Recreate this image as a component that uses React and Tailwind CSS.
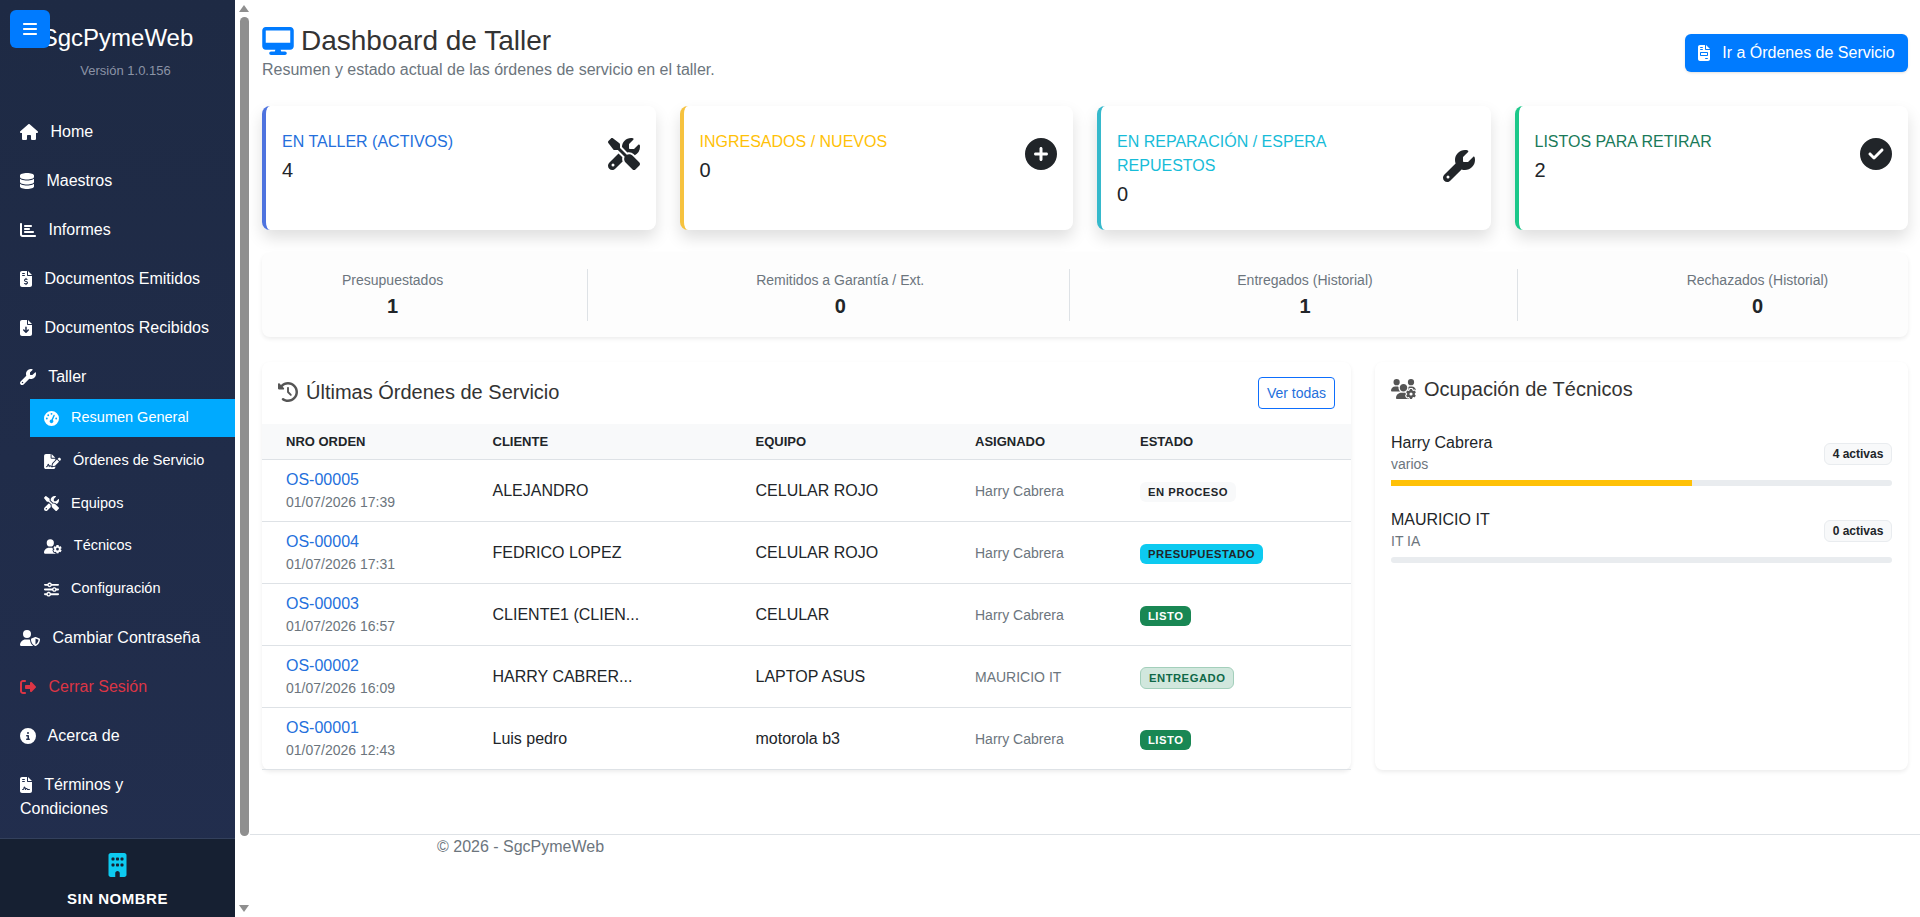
import {
  FaBars, FaBuilding, FaChartBar, FaCircleCheck, FaCircleInfo, FaCirclePlus, FaClockRotateLeft, FaDatabase, FaDesktop,
  FaFileArrowDown, FaFileContract, FaFileInvoice, FaFileInvoiceDollar, FaFileSignature, FaGaugeHigh, FaHouse,
  FaRightFromBracket, FaScrewdriverWrench, FaSliders, FaUserGear, FaUserShield, FaUsersGear, FaWrench,
} from 'react-icons/fa6';

const topItems = [
  { icon: FaHouse, size: 'w-[18px]', label: 'Home' },
  { icon: FaDatabase, size: 'w-[14px]', label: 'Maestros' },
  { icon: FaChartBar, size: 'w-4', label: 'Informes' },
  { icon: FaFileInvoiceDollar, size: 'w-3', label: 'Documentos Emitidos' },
  { icon: FaFileArrowDown, size: 'w-3', label: 'Documentos Recibidos' },
  { icon: FaWrench, size: 'w-4', label: 'Taller' },
];

const subItems = [
  { icon: FaGaugeHigh, size: 'w-[15px]', label: 'Resumen General', active: true },
  { icon: FaFileSignature, size: 'w-[17px]', label: 'Órdenes de Servicio' },
  { icon: FaScrewdriverWrench, size: 'w-[15px]', label: 'Equipos' },
  { icon: FaUserGear, size: 'w-[18px]', label: 'Técnicos' },
  { icon: FaSliders, size: 'w-[15px]', label: 'Configuración' },
];

const stats = [
  { label: 'EN TALLER (ACTIVOS)', value: 4, icon: FaScrewdriverWrench, border: 'border-l-[#4e73df]', text: 'text-[#2470dc]' },
  { label: 'INGRESADOS / NUEVOS', value: 0, icon: FaCirclePlus, border: 'border-l-[#f6c23e]', text: 'text-[#ffc107]' },
  { label: 'EN REPARACIÓN / ESPERA REPUESTOS', value: 0, icon: FaWrench, border: 'border-l-[#36b9cc]', text: 'text-[#17bcd8]' },
  { label: 'LISTOS PARA RETIRAR', value: 2, icon: FaCircleCheck, border: 'border-l-[#1cc88a]', text: 'text-[#1a7a59]' },
];

const summary = [
  { label: 'Presupuestados', value: 1, cls: 'pl-[80px] pr-[144px] border-r' },
  { label: 'Remitidos a Garantía / Ext.', value: 0, cls: 'pl-[168px] pr-[145px] border-r' },
  { label: 'Entregados (Historial)', value: 1, cls: 'pl-[167px] pr-[144px] border-r' },
  { label: 'Rechazados (Historial)', value: 0, cls: 'pl-[169px] pr-[79px]' },
];

const badges = {
  proceso: 'bg-[#f8f9fa] text-[#212529] h-5',
  presupuestado: 'bg-[#0dcaf0] text-[#212529] h-5',
  listo: 'bg-[#198754] text-white h-5',
  entregado: 'bg-[#d1e7dd] text-[#0f6848] border border-[#a3cfbb] h-[22px]',
};

const orders = [
  { id: 'OS-00005', date: '01/07/2026 17:39', client: 'ALEJANDRO', device: 'CELULAR ROJO', tech: 'Harry Cabrera', state: 'EN PROCESO', badge: badges.proceso },
  { id: 'OS-00004', date: '01/07/2026 17:31', client: 'FEDRICO LOPEZ', device: 'CELULAR ROJO', tech: 'Harry Cabrera', state: 'PRESUPUESTADO', badge: badges.presupuestado },
  { id: 'OS-00003', date: '01/07/2026 16:57', client: 'CLIENTE1 (CLIEN...', device: 'CELULAR', tech: 'Harry Cabrera', state: 'LISTO', badge: badges.listo },
  { id: 'OS-00002', date: '01/07/2026 16:09', client: 'HARRY CABRER...', device: 'LAPTOP ASUS', tech: 'MAURICIO IT', state: 'ENTREGADO', badge: badges.entregado },
  { id: 'OS-00001', date: '01/07/2026 12:43', client: 'Luis pedro', device: 'motorola b3', tech: 'Harry Cabrera', state: 'LISTO', badge: badges.listo },
];

const technicians = [
  { name: 'Harry Cabrera', area: 'varios', active: '4 activas', load: 60 },
  { name: 'MAURICIO IT', area: 'IT IA', active: '0 activas', load: 0 },
];

function NavLink({ icon: Icon, size, children, color = 'text-white' }) {
  return (
    <a className={`block px-5 py-[12.5px] text-base leading-6 ${color}`}>
      <Icon className={`inline h-4 mr-2 ${size}`} /> {children}
    </a>
  );
}

function Sidebar() {
  return (
    <aside className="flex h-full w-[250px] shrink-0">
      <div className="flex w-[235px] flex-col bg-linear-to-b from-[#1e2a44] to-[#222e4e]">
        <div className="h-[107px] pt-[23px] text-center">
          <div className="text-2xl leading-[29px] text-white">SgcPymeWeb</div>
          <div className="mt-[9px] pl-4 text-[13px] leading-5 text-[#8b93a5]">Versión 1.0.156</div>
        </div>
        <nav className="flex-1">
          {topItems.map((item) => (
            <NavLink key={item.label} icon={item.icon} size={item.size}>{item.label}</NavLink>
          ))}
          <div className="-mt-[2px] mb-[5px] ml-[30px]">
            {subItems.map((item) => (
              <a
                key={item.label}
                className={`mb-[4.75px] flex h-[38px] items-center pl-[14px] text-[14.5px] text-white ${item.active ? 'bg-[#00aaff]' : ''}`}
              >
                <span className="inline-block">
                  <item.icon className={`inline h-[15px] mr-[8px] ${item.size}`} /> {item.label}
                </span>
              </a>
            ))}
          </div>
          <NavLink icon={FaUserShield} size="w-5">Cambiar Contraseña</NavLink>
          <NavLink icon={FaRightFromBracket} size="w-4" color="text-[#dc3545]">Cerrar Sesión</NavLink>
          <NavLink icon={FaCircleInfo} size="w-4">Acerca de</NavLink>
          <NavLink icon={FaFileContract} size="w-3">Términos y<br />Condiciones</NavLink>
        </nav>
        <div className="h-[79px] border-t border-[#33405c] bg-[#162032] pt-[14px] text-center">
          <FaBuilding className="mx-auto h-6 w-[21px] text-[#0dcaf0]" />
          <div className="mt-[12px] text-[15px] leading-5 font-bold tracking-[0.5px] text-white">SIN NOMBRE</div>
        </div>
      </div>
      <div className="flex w-[15px] flex-col items-center justify-between bg-white py-[5px] pl-[3px]">
        <div className="h-0 w-0 border-x-[5px] border-b-[7px] border-x-transparent border-b-[#8f8f8f]" />
        <div className="mt-[5px] mb-auto h-[819px] w-[9px] rounded-[5px] bg-[#8f8f8f]" />
        <div className="h-0 w-0 border-x-[5px] border-t-[7px] border-x-transparent border-t-[#8f8f8f]" />
      </div>
    </aside>
  );
}

function StatCard({ label, value, icon: Icon, border, text }) {
  return (
    <div className={`h-[124px] rounded-lg border-l-4 bg-white py-6 pr-4 pl-4 shadow-[0_8px_16px_rgba(0,0,0,0.13)] ${border}`}>
      <div className="flex items-center justify-between">
        <div className="w-[230px]">
          <div className={`text-base leading-6 ${text}`}>{label}</div>
          <div className="pt-px text-xl leading-[30px] text-[#212529]">{value}</div>
        </div>
        <Icon className="mb-2 h-8 w-8 text-[#212529]" />
      </div>
    </div>
  );
}

function OrdersCard() {
  return (
    <section className="w-[1089px] rounded-lg bg-white shadow-[0_2px_4px_rgba(0,0,0,0.075)]">
      <div className="flex h-[62px] items-center justify-between pr-4 pl-4">
        <h2 className="-mt-[2px] flex items-center gap-2 text-xl text-[#333]">
          <FaClockRotateLeft className="h-5 w-5 text-[#555]" />
          Últimas Órdenes de Servicio
        </h2>
        <button className="h-8 w-[77px] rounded-[4px] border border-[#0d6efd] text-sm text-[#2470dc]">Ver todas</button>
      </div>
      <table className="w-full table-fixed border-collapse text-left">
        <thead>
          <tr className="h-[35px] border-b border-[#dee2e6] bg-[#f8f9fa] text-[13px] font-bold text-[#212529]">
            <th className="w-[206.5px] pl-6">NRO ORDEN</th>
            <th className="w-[263px] pl-6">CLIENTE</th>
            <th className="w-[219.5px] pl-6">EQUIPO</th>
            <th className="w-[165px] pl-6">ASIGNADO</th>
            <th className="pl-6">ESTADO</th>
          </tr>
        </thead>
        <tbody>
          {orders.map((order) => (
            <tr key={order.id} className="h-[62px] border-b border-[#dee2e6] text-base text-[#212529]">
              <td className="pl-6">
                <div className="leading-6 text-[#2470dc]">{order.id}</div>
                <div className="text-sm leading-[21px] text-[#6c757d]">{order.date}</div>
              </td>
              <td className="pt-[2px] pl-6">{order.client}</td>
              <td className="pt-[2px] pl-6">{order.device}</td>
              <td className="pt-[2px] pl-6 text-sm text-[#6c757d]">{order.tech}</td>
              <td className="pt-[2px] pl-6">
                <span className={`inline-flex items-center rounded-md px-2 text-[11.25px] font-bold tracking-[0.5px] ${order.badge}`}>
                  {order.state}
                </span>
              </td>
            </tr>
          ))}
        </tbody>
      </table>
    </section>
  );
}

function TechniciansCard() {
  return (
    <section className="w-[533px] rounded-lg bg-white px-4 pt-[13px] shadow-[0_2px_4px_rgba(0,0,0,0.075)]">
      <h2 className="flex h-7 items-center gap-[8px] text-xl text-[#333]">
        <FaUsersGear className="h-[20px] w-[25px] text-[#555]" />
        Ocupación de Técnicos
      </h2>
      <div className="mt-[28px] flex flex-col gap-[22px]">
        {technicians.map((tech) => (
          <div key={tech.name}>
            <div className="flex items-center justify-between">
              <div>
                <div className="text-base leading-6 text-[#212529]">{tech.name}</div>
                <div className="-mt-px text-sm leading-5 text-[#6c757d]">{tech.area}</div>
              </div>
              <span className="mt-[3px] flex h-[22px] w-[68px] items-center justify-center rounded-md border border-[#e9ecef] bg-[#f8f9fa] text-xs font-bold text-[#212529]">
                {tech.active}
              </span>
            </div>
            <div className="mt-[6px] h-[6px] rounded-full bg-[#e9ecef]">
              <div className="h-full bg-[#ffc107]" style={{ width: `${tech.load}%` }} />
            </div>
          </div>
        ))}
      </div>
    </section>
  );
}

export default function App() {
  return (
    <div className="relative flex h-screen overflow-hidden bg-white font-['Liberation_Sans',Arial,sans-serif]">
      <button className="absolute top-[10px] left-[10px] z-10 flex h-[38px] w-10 items-center justify-center rounded-md bg-[#007bff] text-white">
        <FaBars className="h-4 w-[14px]" />
      </button>
      <Sidebar />
      <main className="min-w-0 flex-1">
        <div className="px-3 pt-[23px]">
          <header className="mb-6 flex items-center justify-between">
            <div>
              <h1 className="flex items-center gap-[7px] pt-px text-[28px] leading-[33px] text-[#333]">
                <FaDesktop className="h-7 w-8 text-[#007bff]" />
                Dashboard de Taller
              </h1>
              <p className="text-base leading-[25px] text-[#6c757d]">Resumen y estado actual de las órdenes de servicio en el taller.</p>
            </div>
            <button className="flex h-[38px] w-[223px] items-center justify-center gap-[12px] rounded-md bg-[#007bff] text-base text-white shadow-sm">
              <FaFileInvoice className="h-4 w-3" />
              Ir a Órdenes de Servicio
            </button>
          </header>

          <div className="grid grid-cols-4 gap-6">
            {stats.map((stat) => <StatCard key={stat.label} {...stat} />)}
          </div>

          <div className="mt-[23px] flex h-[84px] items-center rounded-lg bg-[#fdfdfd] shadow-[0_2px_4px_rgba(0,0,0,0.075)]">
            {summary.map((item) => (
              <div key={item.label} className={`h-[52px] border-[#dee2e6] text-center whitespace-nowrap ${item.cls}`}>
                <div className="pt-px text-sm leading-[21px] text-[#6c757d]">{item.label}</div>
                <div className="text-xl leading-[30px] font-bold text-[#212529]">{item.value}</div>
              </div>
            ))}
          </div>

          <div className="mt-[25px] flex items-stretch gap-6">
            <OrdersCard />
            <TechniciansCard />
          </div>
        </div>
        <footer className="mt-[64px] h-[40px] border-t border-[#dee2e6] pl-[187px] text-base leading-[23px] text-[#6c757d]">
          © 2026 - SgcPymeWeb
        </footer>
      </main>
    </div>
  );
}
